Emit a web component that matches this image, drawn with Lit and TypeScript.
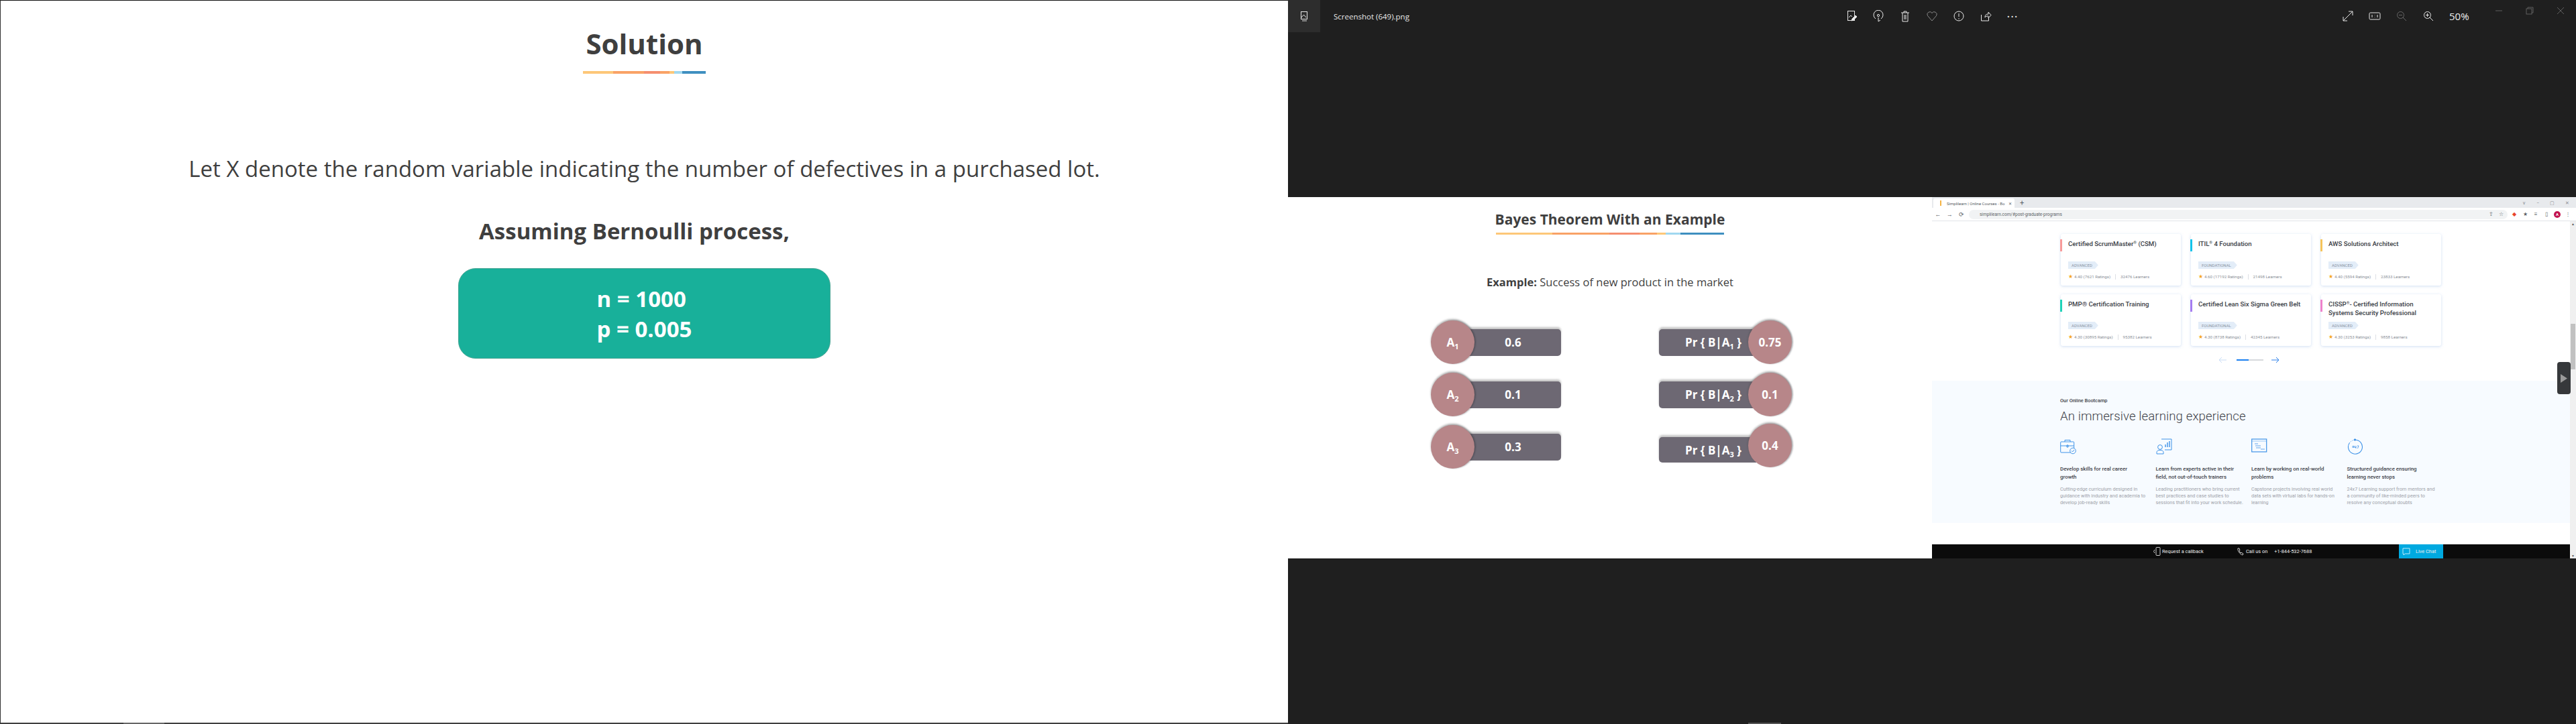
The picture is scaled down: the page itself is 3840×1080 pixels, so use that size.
import { LitElement, html, css, svg } from 'lit';
import { customElement } from 'lit/decorators.js';

const rule = html`
  <div class="rule">
    <i style="flex:45;background:#fdc778"></i>
    <i style="flex:46;background:#f9a266"></i>
    <i style="flex:24;background:#f58e6f"></i>
    <i style="flex:14;background:#f9a266"></i>
    <i style="flex:7;background:#fdc778"></i>
    <i style="flex:12;background:#a0d8f0"></i>
    <i style="flex:35;background:#3f8fc0"></i>
  </div>
`;

const icon = (body: unknown, color = '#e8e8e8', size = 18, vb = 18) => html`
  <svg width=${size} height=${size} viewBox="0 0 ${vb} ${vb}" fill="none" stroke=${color} stroke-width="1">${body}</svg>
`;

const toolIcons = [
  svg`<rect x="3.5" y="1.5" width="10" height="14"/><path d="M5 11l3-3 2 2"/><path d="M9 16l1-3 5-5 2 2-5 5z" fill="#e8e8e8"/>`,
  svg`<path d="M5 13a7 7 0 1 1 8 0"/><circle cx="9" cy="8" r="1.6"/><path d="M9 11v6M9 17l3-2"/>`,
  svg`<path d="M3 4h12M7 4V2h4v2M5 4v13h8V4M8 7v7M10 7v7"/>`,
  svg`<path d="M9 16L2.5 8.5a3.8 3.8 0 0 1 6.5-4 3.8 3.8 0 0 1 6.5 4z" stroke="#8a8a8a"/>`,
  svg`<circle cx="9" cy="9" r="7"/><path d="M9 5v5M9 12v1.5"/>`,
  svg`<path d="M2.5 7v9h11v-4M8 11c0-4 2-5 5-5V3l4 4.5-4 4.5V9c-2 0-4 0-5 2z"/>`,
];

const courses = [
  { name: 'Certified ScrumMaster', sup: '®', rest: ' (CSM)', level: 'ADVANCED', rating: '4.40 (7621 Ratings)', learners: '32476 Learners', color: '#f79a9a' },
  { name: 'ITIL', sup: '®', rest: ' 4 Foundation', level: 'FOUNDATIONAL', rating: '4.60 (17192 Ratings)', learners: '21498 Learners', color: '#14c3ea' },
  { name: 'AWS Solutions Architect', sup: '', rest: '', level: 'ADVANCED', rating: '4.40 (5594 Ratings)', learners: '23833 Learners', color: '#f5c35a' },
  { name: 'PMP® Certification Training', sup: '', rest: '', level: 'ADVANCED', rating: '4.30 (30895 Ratings)', learners: '95382 Learners', color: '#20d3b8' },
  { name: 'Certified Lean Six Sigma Green Belt', sup: '', rest: '', level: 'FOUNDATIONAL', rating: '4.30 (8738 Ratings)', learners: '42345 Learners', color: '#a67df0' },
  { name: 'CISSP', sup: '®', rest: '- Certified Information', line2: 'Systems Security Professional', level: 'ADVANCED', rating: '4.30 (3253 Ratings)', learners: '9858 Learners', color: '#ee82cc' },
];

const features = [
  {
    title: 'Develop skills for real career growth',
    body: 'Cutting-edge curriculum designed in guidance with industry and academia to develop job-ready skills',
    icon: svg`<rect x="0.7" y="5" width="20" height="16" rx="1"/><path d="M7 5V2.5h8V5M0.7 11h20M10 10h2v3h-2z"/><circle cx="19" cy="18.5" r="4.3" fill="#f7fbff"/><path d="M17 18.5l1.5 1.5 2.5-3"/>`,
  },
  {
    title: 'Learn from experts active in their field, not out-of-touch trainers',
    body: 'Leading practitioners who bring current best practices and case studies to sessions that fit into your work schedule.',
    icon: svg`<path d="M8 1h15v16H13"/><path d="M14 13V9M17 13V6M20 13V4" stroke-width="1.4"/><circle cx="6" cy="13" r="3.4"/><path d="M1 23v-2.5c0-2 2-3 5-3s5 1 5 3V23z"/>`,
  },
  {
    title: 'Learn by working on real-world problems',
    body: 'Capstone projects involving real world data sets with virtual labs for hands-on learning',
    icon: svg`<rect x="0.7" y="1" width="22" height="19" stroke-width="1.2"/><path d="M0.7 4h22" stroke-width="0.5"/><path d="M5 8h5M6 11h8M7 14h7M14 16h6" stroke-width="0.8"/>`,
  },
  {
    title: 'Structured guidance ensuring learning never stops',
    body: '24x7 Learning support from mentors and a community of like-minded peers to resolve any conceptual doubts',
    icon: svg`<path d="M12 2.2A10.5 10.5 0 1 1 3.5 6.5" stroke-width="1.1"/><path d="M3.5 6.5A10.5 10.5 0 0 1 12 2.2" stroke-dasharray="1 1.4"/><circle cx="11.5" cy="2" r="1.2" fill="#3f93e8"/><path d="M8 11.5h1.8v2H8zM11 11v2.5h2M13 11v4M15 11h2l-1.5 4" stroke-width="0.8"/>`,
  },
];

@customElement('app-root')
export class AppRoot extends LitElement {
  static styles = css`
    :host {
      display: grid;
      grid-template-columns: 1920px 1920px;
      width: 3840px;
      height: 1080px;
      overflow: hidden;
      font-family: 'Open Sans', 'Noto Sans', sans-serif;
    }

    .deck {
      background: #fff;
      border-top: 1px solid #111;
      border-left: 1px solid #333;
      display: flex;
      flex-direction: column;
      align-items: center;
      box-sizing: border-box;
      color: #3f3f3f;
    }
    .deck h1 {
      margin: 36px 0 0;
      font-size: 42px;
      line-height: 56px;
      font-weight: 700;
    }
    .rule {
      display: flex;
      height: 4px;
      width: 183px;
      margin-top: 13px;
    }
    .rule i { display: block; }
    .deck .lead {
      margin: 117px 0 0;
      font-size: 33px;
      line-height: 50px;
    }
    .deck .assume {
      margin: 43px 30px 0 0;
      font-size: 33px;
      line-height: 50px;
      font-weight: 700;
    }
    .deck .params {
      margin-top: 30px;
      width: 555px;
      height: 135px;
      box-sizing: border-box;
      background: #18b09a;
      border: 1px solid #4aa594;
      border-radius: 26px;
      color: #fff;
      font-size: 33px;
      line-height: 45px;
      font-weight: 700;
      display: flex;
      align-items: center;
      justify-content: center;
    }
    .strip {
      margin-top: auto;
      height: 2px;
      width: 100%;
      flex: none;
      display: flex;
    }
    .deck .strip { background: #3f3f3f; }
    .strip i { display: block; height: 2px; background: #666; }
    .deck .strip i { margin-left: 183px; width: 61px; }
    .viewer .strip i { margin-left: 686px; width: 49px; background: #555; }

    .viewer {
      background: #1f1f1f;
      display: flex;
      flex-direction: column;
      color: #e8e8e8;
    }
    .toolbar {
      height: 48px;
      display: flex;
      align-items: center;
      font-size: 11.5px;
    }
    .file-btn {
      width: 48px;
      height: 48px;
      background: #2d2d2d;
      display: flex;
      align-items: center;
      justify-content: center;
    }
    .file-name { margin-left: 20px; width: 752px; }
    .tools { display: flex; }
    .tools span {
      width: 40px;
      display: flex;
      align-items: center;
      justify-content: center;
    }
    .tools .more {
      font-size: 18px;
      letter-spacing: 1px;
      line-height: 18px;
    }
    .zoom-tools { display: flex; margin-left: 460px; align-items: center; }
    .zoom-tools span {
      width: 40px;
      display: flex;
      align-items: center;
      justify-content: center;
    }
    .pct { font-size: 15px; margin-left: 11px; width: 51px; color: #eee; }
    .win { display: flex; align-self: flex-start; }
    .win span {
      width: 46px;
      height: 32px;
      display: flex;
      align-items: center;
      justify-content: center;
    }

    .shot {
      margin-top: 246px;
      height: 539px;
      display: grid;
      grid-template-columns: 960px 960px;
    }

    .slide {
      background: #fff;
      display: flex;
      flex-direction: column;
      align-items: center;
      color: #3f3f3f;
    }
    .slide h2 {
      margin: 16px 0 0;
      font-size: 21px;
      line-height: 34px;
      font-weight: 700;
    }
    .slide .rule { width: 340px; height: 3px; margin-top: 3px; }
    .slide .example {
      margin: 57px 0 0;
      font-size: 16.5px;
      line-height: 28px;
      font-weight: 400;
    }
    .slide .example b { font-weight: 700; }
    .odds {
      margin: 43px 0 0 4px;
      width: 538px;
      display: grid;
      grid-template-columns: 194px 198px;
      justify-content: space-between;
      row-gap: 13px;
      color: #fff;
      font-size: 17px;
      font-weight: 700;
    }
    .pill {
      display: flex;
      align-items: center;
      height: 65px;
    }
    .pill .ball {
      width: 65px;
      height: 65px;
      flex: none;
      border-radius: 50%;
      background: #b78689;
      box-shadow: 0 -2px 3px rgba(60, 60, 60, 0.4), 2px 0 2px rgba(50, 50, 60, 0.3);
      position: relative;
      display: flex;
      align-items: center;
      justify-content: center;
    }
    .pill .bar {
      height: 40px;
      flex: 1;
      background: #6d6873;
      box-shadow: 0 -3px 3px rgba(90, 90, 90, 0.35);
      display: flex;
      align-items: center;
    }
    .pill.left .bar {
      margin-left: -8px;
      border-radius: 0 5px 5px 0;
      justify-content: center;
      padding-right: 6px;
    }
    .pill.right .bar {
      margin-right: -12px;
      border-radius: 5px 0 0 5px;
      padding-left: 39px;
    }
    .pill.right.low .bar { margin-top: 9px; height: 38px; }
    .pill.right.low .ball { margin-top: -4px; }
    .pill sub { font-size: 11px; line-height: 0; vertical-align: -4px; }

    .browser {
      background: #fff;
      display: flex;
      flex-direction: column;
      font-family: Roboto, sans-serif;
      color: #3a3d45;
      overflow: hidden;
    }
    .tabs {
      height: 16px;
      background: #e8eaed;
      display: flex;
      align-items: flex-end;
      font-size: 6px;
      color: #5a5e66;
      flex: none;
    }
    .tab {
      width: 121px;
      height: 14px;
      margin-left: 2px;
      background: #fff;
      border-radius: 3px 3px 0 0;
      box-sizing: border-box;
      padding: 0 4px 0 10px;
      display: flex;
      align-items: center;
      white-space: nowrap;
    }
    .favicon { width: 2px; height: 8px; background: #f5b342; margin-right: 8px; }
    .tab .close { margin-left: auto; }
    .plus { margin-left: 8px; font-size: 11px; line-height: 14px; }
    .controls {
      margin-left: auto;
      display: flex;
      gap: 16px;
      height: 14px;
      align-items: center;
      padding-right: 10px;
      color: #8a8d93;
      font-size: 7px;
    }
    .addr {
      height: 20px;
      background: #fff;
      border-bottom: 1px solid #e2e4e8;
      display: flex;
      align-items: center;
      font-size: 6.5px;
      color: #5b5f66;
      flex: none;
      box-sizing: border-box;
    }
    .nav { width: 55px; display: flex; font-size: 9px; flex: none; }
    .nav span { width: 17.5px; text-align: center; }
    .url {
      width: 803px;
      height: 14px;
      border-radius: 7px;
      background: #f1f3f4;
      display: flex;
      align-items: center;
      padding: 0 6px 0 16px;
      box-sizing: border-box;
      flex: none;
    }
    .url .marks { margin-left: auto; display: flex; gap: 8px; font-size: 8px; }
    .ext { display: flex; align-items: center; padding-left: 2px; font-size: 8px; }
    .ext span { width: 16px; display: flex; justify-content: center; }
    .ext .avatar-slot .avatar {
      width: 10px;
      height: 10px;
      border-radius: 50%;
      background: #c2134f;
      color: #fff;
      font-size: 6px;
      display: flex;
      align-items: center;
      justify-content: center;
    }
    .page { flex: 1; display: flex; position: relative; min-height: 0; }
    .content { width: 951px; display: flex; flex-direction: column; background: #fff; }
    .cards {
      margin: 19px 0 0 192px;
      display: grid;
      grid-template-columns: repeat(3, 179px);
      grid-auto-rows: 77px;
      column-gap: 15px;
      row-gap: 13px;
    }
    .card {
      position: relative;
      background: #fff;
      border-radius: 3px;
      box-shadow: 0 1px 4px rgba(120, 160, 220, 0.35);
      box-sizing: border-box;
      padding: 8px 4px 0 11px;
      display: flex;
      flex-direction: column;
    }
    .card .accent {
      position: absolute;
      left: -1px;
      top: 8px;
      width: 3px;
      height: 18px;
    }
    .card h3 {
      margin: 0;
      font-size: 9.6px;
      line-height: 13px;
      font-weight: 500;
      height: 33px;
      color: #3a3d45;
      white-space: nowrap;
    }
    .card h3 sup { font-size: 6px; line-height: 0; vertical-align: 3px; }
    .badge {
      align-self: flex-start;
      height: 11px;
      padding: 0 9px 0 5px;
      background: #e3edf8;
      color: #8a93a3;
      font-size: 6px;
      line-height: 11px;
      clip-path: polygon(0 0, calc(100% - 5px) 0, 100% 50%, calc(100% - 5px) 100%, 0 100%);
    }
    .meta {
      margin-top: 8px;
      display: flex;
      align-items: center;
      font-size: 6.2px;
      color: #8b8f97;
      white-space: nowrap;
    }
    .star { color: #f5a623; font-size: 8px; line-height: 8px; margin-right: 2px; }
    .meta .sep { width: 1px; height: 8px; background: #dde0e5; margin: 0 7px; }
    .pager {
      margin: 16px 0 0 427px;
      display: flex;
      align-items: center;
      height: 10px;
    }
    .track { width: 40px; height: 2px; background: #d6d8dc; margin: 0 12px 0 15px; }
    .track i { display: block; width: 18px; height: 2px; background: #1a7ff0; }
    .boot {
      margin-top: 26px;
      height: 212px;
      background: #f7fbff;
      box-sizing: border-box;
      padding: 25px 0 0 191px;
      flex: none;
    }
    .boot .kicker { font-size: 7.4px; line-height: 10px; font-weight: 500; color: #3e4249; }
    .boot .head {
      margin-top: 5px;
      font-size: 18.6px;
      line-height: 26px;
      font-weight: 300;
      color: #3e4249;
      letter-spacing: 0.1px;
    }
    .feats {
      margin-top: 20px;
      display: grid;
      grid-template-columns: repeat(4, 142.5px);
    }
    .feat { padding-right: 18px; }
    .feat svg { display: block; margin-bottom: 16px; }
    .feat h4 {
      margin: 0;
      font-size: 7.9px;
      line-height: 12px;
      font-weight: 500;
      color: #3e4249;
    }
    .feat p {
      margin: 7px -7px 0 0;
      font-size: 7.2px;
      line-height: 10px;
      color: #9ea2a9;
    }
    .cta {
      margin-top: 32px;
      height: 21px;
      background: #0b0b0b;
      color: #eee;
      font-size: 7.4px;
      display: flex;
      align-items: center;
      flex: none;
    }
    .cta .back { margin-left: 330px; display: flex; align-items: center; gap: 2px; width: 125px; }
    .cta .call { display: flex; align-items: center; gap: 3px; width: 241px; }
    .cta .num { margin-left: 7px; }
    .chat {
      width: 66px;
      height: 21px;
      background: #00a9e0;
      display: flex;
      align-items: center;
      gap: 8px;
      padding-left: 5px;
      box-sizing: border-box;
    }
    .scroll {
      width: 9px;
      background: #f0f0f0;
      display: flex;
      flex-direction: column;
      align-items: center;
      color: #555;
      font-size: 5px;
      line-height: 8px;
    }
    .scroll .thumb { margin-top: 145px; width: 7px; height: 68px; background: #c1c1c1; }
    .scroll .down { margin-top: auto; }
    .handle {
      position: absolute;
      right: 8px;
      top: 210px;
      width: 20px;
      height: 48px;
      background: #36383b;
      border-radius: 4px;
      display: flex;
      align-items: center;
      justify-content: center;
    }
  `;

  renderPill(side: 'left' | 'right', n: number, value: string) {
    if (side === 'left') {
      return html`
        <div class="pill left">
          <div class="ball"><span>A<sub>${n}</sub></span></div>
          <div class="bar">${value}</div>
        </div>
      `;
    }
    return html`
      <div class="pill right ${n === 3 ? 'low' : ''}">
        <div class="bar"><span>Pr { B|A<sub>${n}</sub> }</span></div>
        <div class="ball">${value}</div>
      </div>
    `;
  }

  render() {
    const left = ['0.6', '0.1', '0.3'];
    const right = ['0.75', '0.1', '0.4'];
    return html`
      <section class="deck">
        <h1>Solution</h1>
        ${rule}
        <p class="lead">Let X denote the random variable indicating the number of defectives in a purchased lot.</p>
        <p class="assume">Assuming Bernoulli process,</p>
        <div class="params"><div><div>n = 1000</div><div>p = 0.005</div></div></div>
        <div class="strip"><i></i></div>
      </section>

      <section class="viewer">
        <div class="toolbar">
          <div class="file-btn">
            ${icon(svg`<rect x="4.5" y="2.5" width="9" height="11"/><path d="M5 11l3.5-4 3.5 4M6 16h7"/>`)}
          </div>
          <div class="file-name">Screenshot (649).png</div>
          <div class="tools">
            ${toolIcons.map(i => html`<span>${icon(i)}</span>`)}
            <span class="more">···</span>
          </div>
          <div class="zoom-tools">
            <span>${icon(svg`<path d="M2 16L16 2M10 2h6v6M2 10v6h6"/>`)}</span>
            <span>${icon(svg`<rect x="1" y="4" width="16" height="10" rx="1.5"/><path d="M5 7v4M9 7.5v.5M9 10v.5M13 7v4"/>`)}</span>
            <span>${icon(svg`<circle cx="7.5" cy="7.5" r="5"/><path d="M5 7.5h5M11 11l5 5"/>`, '#666')}</span>
            <span>${icon(svg`<circle cx="7.5" cy="7.5" r="5"/><path d="M5 7.5h5M7.5 5v5M11 11l5 5"/>`)}</span>
            <div class="pct">50%</div>
          </div>
          <div class="win">
            <span>${icon(svg`<path d="M4 9h10"/>`, '#5f5f5f')}</span>
            <span>${icon(svg`<rect x="4" y="6" width="8" height="8"/><path d="M6 6V4h8v8h-2"/>`, '#5f5f5f')}</span>
            <span>${icon(svg`<path d="M4 4l10 10M14 4L4 14"/>`, '#5f5f5f')}</span>
          </div>
        </div>

        <div class="shot">
          <div class="slide">
            <h2>Bayes Theorem With an Example</h2>
            ${rule}
            <p class="example"><b>Example:</b> Success of new product in the market</p>
            <div class="odds">
              ${left.map((v, i) => html`
                ${this.renderPill('left', i + 1, v)}
                ${this.renderPill('right', i + 1, right[i])}
              `)}
            </div>
          </div>

          <div class="browser">
            <div class="tabs">
              <div class="tab"><i class="favicon"></i><span>Simplilearn | Online Courses - Bo</span><span class="close">✕</span></div>
              <span class="plus">+</span>
              <div class="controls"><span>∨</span><span>−</span><span>▢</span><span>✕</span></div>
            </div>
            <div class="addr">
              <div class="nav"><span>←</span><span>→</span><span>⟳</span></div>
              <div class="url">simplilearn.com/#post-graduate-programs<span class="marks"><span>⇪</span><span>☆</span></span></div>
              <div class="ext">
                <span style="color:#e8452c">◆</span><span>★</span><span>≡</span><span>▯</span>
                <span class="avatar-slot"><b class="avatar">A</b></span><span>⋮</span>
              </div>
            </div>
            <div class="page">
              <div class="content">
                <div class="cards">
                  ${courses.map(c => html`
                    <div class="card">
                      <span class="accent" style="background:${c.color}"></span>
                      <h3>${c.name}${c.sup ? html`<sup>${c.sup}</sup>` : ''}${c.rest}${c.line2 ? html`<br />${c.line2}` : ''}</h3>
                      <span class="badge">${c.level}</span>
                      <div class="meta"><span class="star">★</span>${c.rating}<span class="sep"></span>${c.learners}</div>
                    </div>
                  `)}
                </div>
                <div class="pager">
                  <svg width="12" height="10" viewBox="0 0 12 10" fill="none" stroke="#c9dcf5"><path d="M12 5H1M5 1L1 5l4 4"/></svg>
                  <div class="track"><i></i></div>
                  <svg width="12" height="10" viewBox="0 0 12 10" fill="none" stroke="#2a7fe8"><path d="M0 5h11M7 1l4 4-4 4"/></svg>
                </div>
                <div class="boot">
                  <div class="kicker">Our Online Bootcamp</div>
                  <div class="head">An immersive learning experience</div>
                  <div class="feats">
                    ${features.map(f => html`
                      <div class="feat">
                        <svg width="24" height="24" viewBox="0 0 24 24" fill="none" stroke="#3f93e8">${f.icon}</svg>
                        <h4>${f.title}</h4>
                        <p>${f.body}</p>
                      </div>
                    `)}
                  </div>
                </div>
                <div class="cta">
                  <div class="back">
                    <svg width="11" height="13" viewBox="0 0 11 13" fill="none" stroke="#ccc"><rect x="4" y="0.5" width="6" height="12" rx="1"/><path d="M2 4L0.5 6.5 2 9"/></svg>
                    Request a callback
                  </div>
                  <div class="call">
                    <svg width="10" height="12" viewBox="0 0 10 12" fill="none" stroke="#ccc"><path d="M1 1c-1 3 3 9 7 10l1-2-3-2-1 1-2-3 1-1-1-3z"/></svg>
                    Call us on <span class="num">+1-844-532-7688</span>
                  </div>
                  <div class="chat">
                    <svg width="12" height="13" viewBox="0 0 12 13" fill="none" stroke="#bfe9f8"><path d="M1 2h10v8H4l-2 2v-2H1z"/></svg>
                    Live Chat
                  </div>
                </div>
              </div>
              <div class="scroll">
                <span>▲</span>
                <div class="thumb"></div>
                <span class="down">▼</span>
              </div>
              <div class="handle">
                <svg width="10" height="13" viewBox="0 0 10 13"><path d="M0 0l10 6.5L0 13z" fill="#9a9a9a"/></svg>
              </div>
            </div>
          </div>
        </div>
        <div class="strip"><i></i></div>
      </section>
    `;
  }
}
